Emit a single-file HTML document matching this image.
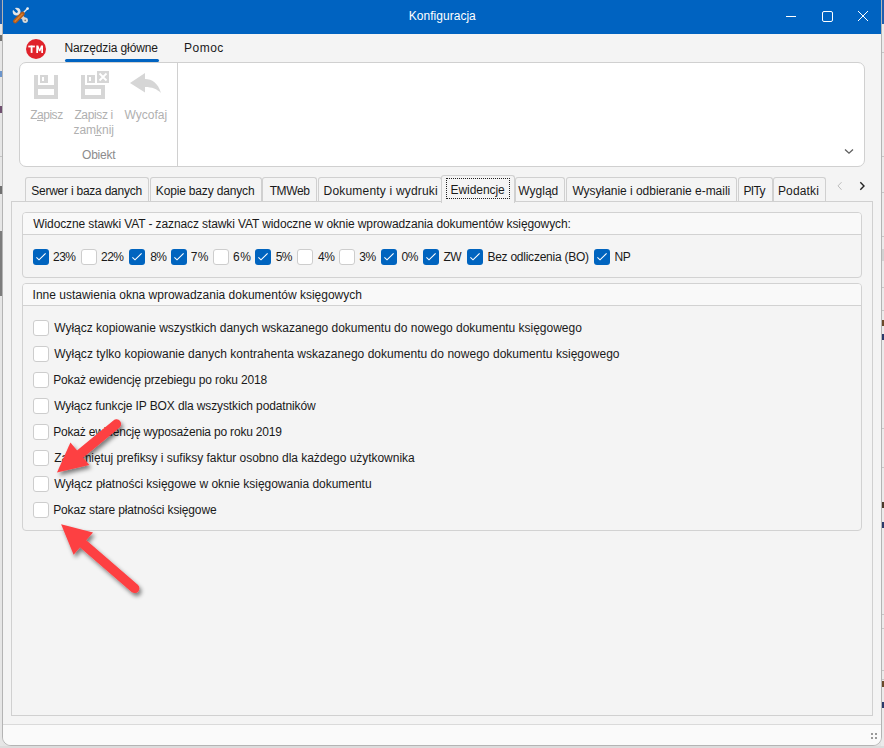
<!DOCTYPE html><html><head><meta charset="utf-8"><style>
html,body{margin:0;padding:0;}
body{width:884px;height:748px;overflow:hidden;position:relative;background:#e4e4e4;font-family:"Liberation Sans",sans-serif;}
.t{position:absolute;white-space:pre;font-family:"Liberation Sans",sans-serif;}
.a{position:absolute;}
</style></head><body><div style="position:absolute;left:0px;top:0px;width:3px;height:748px;background:#e6e6e6"></div>
<div style="position:absolute;left:0px;top:0px;width:3px;height:24px;background:#1f5fb0"></div>
<div style="position:absolute;left:0px;top:35px;width:2px;height:6px;background:#707070"></div>
<div style="position:absolute;left:0px;top:71px;width:2px;height:6px;background:#6b95cc"></div>
<div style="position:absolute;left:0px;top:106px;width:2px;height:7px;background:#705070"></div>
<div style="position:absolute;left:0px;top:156px;width:3px;height:1px;background:#c4c4c4"></div>
<div style="position:absolute;left:0px;top:186px;width:2px;height:8px;background:#707070"></div>
<div style="position:absolute;left:0px;top:231px;width:2px;height:65px;background:#7d7d7d"></div>
<div style="position:absolute;left:881px;top:0px;width:3px;height:748px;background:#ebebeb"></div>
<div style="position:absolute;left:881px;top:0px;width:3px;height:24px;background:#1f5fb0"></div>
<div style="position:absolute;left:881px;top:52px;width:3px;height:1px;background:#c6c6c6"></div>
<div style="position:absolute;left:881px;top:156px;width:3px;height:1px;background:#c6c6c6"></div>
<div style="position:absolute;left:881px;top:192px;width:3px;height:1px;background:#c6c6c6"></div>
<div style="position:absolute;left:881px;top:236px;width:3px;height:1px;background:#c6c6c6"></div>
<div style="position:absolute;left:881px;top:287px;width:3px;height:1px;background:#c6c6c6"></div>
<div style="position:absolute;left:881px;top:310px;width:3px;height:1px;background:#c6c6c6"></div>
<div style="position:absolute;left:881px;top:428px;width:3px;height:1px;background:#c6c6c6"></div>
<div style="position:absolute;left:881px;top:467px;width:3px;height:1px;background:#c6c6c6"></div>
<div style="position:absolute;left:881px;top:614px;width:3px;height:1px;background:#c6c6c6"></div>
<div style="position:absolute;left:881px;top:628px;width:3px;height:1px;background:#c6c6c6"></div>
<div style="position:absolute;left:881px;top:670px;width:3px;height:1px;background:#c6c6c6"></div>
<div style="position:absolute;left:881px;top:679px;width:3px;height:1px;background:#c6c6c6"></div>
<div style="position:absolute;left:881px;top:249px;width:3px;height:12px;background:#d2d2d2"></div>
<div style="position:absolute;left:882px;top:320px;width:2px;height:6px;background:#6a4a2a"></div>
<div style="position:absolute;left:882px;top:334px;width:2px;height:6px;background:#2a3a6a"></div>
<div style="position:absolute;left:882px;top:502px;width:2px;height:6px;background:#4a3a2a"></div>
<div style="position:absolute;left:882px;top:522px;width:2px;height:6px;background:#2a3a6a"></div>
<div style="position:absolute;left:882px;top:681px;width:2px;height:6px;background:#6a4a2a"></div>
<div style="position:absolute;left:882px;top:702px;width:2px;height:6px;background:#2a3a6a"></div>
<div style="position:absolute;left:0px;top:746px;width:884px;height:2px;background:#dcdcdc"></div>
<div class="a" style="left:2px;top:-1px;width:878px;height:745px;border:1px solid #b4b4b4;border-radius:0 0 9px 9px;background:#f4f4f4;overflow:hidden">
<div class="a" style="left:0;top:0;width:878px;height:34px;background:#0063c1"></div>
<div class="a" style="left:0;top:724px;width:878px;height:22px;border-top:1px solid #dadada;background:#fafafa"></div>
</div>
<div style="position:absolute;left:871px;top:733px;width:2px;height:2px;background:#999999"></div>
<div style="position:absolute;left:875px;top:733px;width:2px;height:2px;background:#999999"></div>
<div style="position:absolute;left:871px;top:737px;width:2px;height:2px;background:#999999"></div>
<div style="position:absolute;left:875px;top:737px;width:2px;height:2px;background:#999999"></div>
<svg class="a" style="left:0;top:0" width="884" height="40" viewBox="0 0 884 40">
<g stroke-linecap="round">
<line x1="17" y1="12" x2="25" y2="20" stroke="#d4d4d4" stroke-width="3.2"/>
<circle cx="16.6" cy="11.6" r="3.9" fill="#e6e6e6"/>
<path d="M16.6,11.6 L12.4,7.4" stroke="#0063c1" stroke-width="2.6"/>
<circle cx="25.2" cy="20.2" r="2.7" fill="#d8d8d8"/>
<circle cx="25.2" cy="20.4" r="0.8" fill="#707070"/>
<line x1="22" y1="14" x2="27.6" y2="8.4" stroke="#e4e4e4" stroke-width="1.4"/>
<circle cx="27.6" cy="8.6" r="1.3" fill="#f0f0f0"/>
<line x1="15.2" y1="21.2" x2="22.6" y2="13.8" stroke="#b35a1a" stroke-width="4.4"/>
<line x1="15.2" y1="21.2" x2="22.6" y2="13.8" stroke="#d9822e" stroke-width="1.6" stroke-dasharray="1 1.2"/>
</g>
<line x1="786" y1="16.5" x2="796" y2="16.5" stroke="#fff" stroke-width="1"/>
<rect x="822.5" y="11.5" width="10" height="10" rx="1.5" fill="none" stroke="#fff" stroke-width="1"/>
<path d="M858,11 L868,21 M868,11 L858,21" stroke="#fff" stroke-width="1"/>
</svg>
<div class="a" style="left:26px;top:39px;width:20px;height:20px;border-radius:50%;background:#e0222b"></div>
<svg class="a" style="left:20px;top:34px" width="30" height="30" viewBox="20 34 30 30"><rect x="28.3" y="45.6" width="6.6" height="1.8" fill="#fff"/><rect x="30.7" y="45.6" width="1.8" height="7.3" fill="#fff"/><path d="M36.3,52.9 V45.6 H38.3 L39.65,49.3 L41.0,45.6 H43 V52.9 H41.3 V48.4 L40.4,51.3 H38.9 L38.0,48.4 V52.9 Z" fill="#fff"/></svg>
<div style="position:absolute;left:65px;top:59px;width:94px;height:3px;background:#0063c1;border-radius:2px"></div>
<div class="a" style="left:19px;top:62px;width:844px;height:103px;border:1px solid #d0d0d0;border-radius:7px;background:#fff"></div>
<div style="position:absolute;left:177px;top:63px;width:1px;height:103px;background:#d0d0d0"></div>
<svg class="a" style="left:0;top:60px" width="200" height="50" viewBox="0 60 200 50">
<path fill="#d6d6d6" fill-rule="evenodd" d="M34,75 H38 V85 H54 V75 H58 V99 H34 Z M38,89 V95 H54 V89 Z"/>
<path fill="#d6d6d6" fill-rule="evenodd" d="M40,75 H48 V83 H40 Z M42,77 V81 H44 V77 Z"/>
<path fill="#d6d6d6" fill-rule="evenodd" d="M81,75 H85 V85 H105 V99 H81 Z M85,89 V95 H101 V89 Z"/>
<path fill="#d6d6d6" fill-rule="evenodd" d="M87,75 H95 V83 H87 Z M89,77 V81 H91 V77 Z"/>
<rect x="97" y="71" width="12" height="12" fill="#d6d6d6"/>
<path d="M99.5,73.5 L106.5,80.5 M106.5,73.5 L99.5,80.5" stroke="#fff" stroke-width="1.8"/>
<path fill="#d6d6d6" d="M130,83 L145,73 L145,79 C152,79 158,83 161,93 C157,89 152,87 145,87 L145,92.5 Z"/>
</svg>
<div style="position:absolute;left:37px;top:120px;width:6px;height:1px;background:#b4b4b4"></div>
<div style="position:absolute;left:95px;top:135px;width:6px;height:1px;background:#b4b4b4"></div>
<svg class="a" style="left:840px;top:144px" width="20" height="14" viewBox="840 144 20 14"><path d="M845,149.5 L849,153.2 L853,149.5" fill="none" stroke="#5f5f5f" stroke-width="1.3"/></svg>
<div class="a" style="left:11px;top:201px;width:860px;height:513px;border:1px solid #d0d0d0;background:#f4f4f4"></div>
<div class="a" style="left:25px;top:177px;width:122px;height:23px;border:1px solid #d0d0d0;border-bottom:none;border-radius:3px 3px 0 0;background:#f4f4f4"></div>
<div class="a" style="left:150px;top:177px;width:110px;height:23px;border:1px solid #d0d0d0;border-bottom:none;border-radius:3px 3px 0 0;background:#f4f4f4"></div>
<div class="a" style="left:262px;top:177px;width:53px;height:23px;border:1px solid #d0d0d0;border-bottom:none;border-radius:3px 3px 0 0;background:#f4f4f4"></div>
<div class="a" style="left:318px;top:177px;width:122px;height:23px;border:1px solid #d0d0d0;border-bottom:none;border-radius:3px 3px 0 0;background:#f4f4f4"></div>
<div class="a" style="left:515px;top:177px;width:48px;height:23px;border:1px solid #d0d0d0;border-bottom:none;border-radius:3px 3px 0 0;background:#f4f4f4"></div>
<div class="a" style="left:566px;top:177px;width:169px;height:23px;border:1px solid #d0d0d0;border-bottom:none;border-radius:3px 3px 0 0;background:#f4f4f4"></div>
<div class="a" style="left:738px;top:177px;width:33px;height:23px;border:1px solid #d0d0d0;border-bottom:none;border-radius:3px 3px 0 0;background:#f4f4f4"></div>
<div class="a" style="left:773px;top:177px;width:51px;height:23px;border:1px solid #d0d0d0;border-bottom:none;border-radius:3px 3px 0 0;background:#f4f4f4"></div>
<div class="a" style="left:441px;top:175px;width:72px;height:27px;border:1px solid #d0d0d0;border-bottom:none;border-radius:3px 3px 0 0;background:#f4f4f4"></div>
<div class="a" style="left:446px;top:178px;width:62px;height:19px;border:1px dotted #222"></div>
<svg class="a" style="left:830px;top:176px" width="44" height="20" viewBox="830 176 44 20"><path d="M841.5,182.2 L838,185.9 L841.5,189.7" fill="none" stroke="#bdbdbd" stroke-width="1"/><path d="M860.3,182.2 L864,185.9 L860.3,189.7" fill="none" stroke="#222" stroke-width="1.4"/></svg>
<div class="a" style="left:22px;top:212px;width:838px;height:64px;border:1px solid #d2d2d2;border-radius:4px;background:#f4f4f4;overflow:hidden"><div style="height:21px;background:#f9f9f9;border-bottom:1px solid #d2d2d2"></div></div>
<div class="a" style="left:22px;top:283px;width:838px;height:246px;border:1px solid #d2d2d2;border-radius:4px;background:#f4f4f4;overflow:hidden"><div style="height:21px;background:#f9f9f9;border-bottom:1px solid #d2d2d2"></div></div>
<svg class="a" style="left:33px;top:249px" width="16" height="16" viewBox="0 0 16 16"><rect x="0" y="0" width="16" height="16" rx="3" fill="#0064bf"/><path d="M3.4,8.4 L6,10.8 L12.6,4.4" fill="none" stroke="#fff" stroke-width="1.1"/></svg>
<div class="a" style="left:81px;top:249px;width:14px;height:14px;border:1px solid #cdcdcd;border-radius:3px;background:#fff"></div>
<svg class="a" style="left:129px;top:249px" width="16" height="16" viewBox="0 0 16 16"><rect x="0" y="0" width="16" height="16" rx="3" fill="#0064bf"/><path d="M3.4,8.4 L6,10.8 L12.6,4.4" fill="none" stroke="#fff" stroke-width="1.1"/></svg>
<svg class="a" style="left:171px;top:249px" width="16" height="16" viewBox="0 0 16 16"><rect x="0" y="0" width="16" height="16" rx="3" fill="#0064bf"/><path d="M3.4,8.4 L6,10.8 L12.6,4.4" fill="none" stroke="#fff" stroke-width="1.1"/></svg>
<div class="a" style="left:213px;top:249px;width:14px;height:14px;border:1px solid #cdcdcd;border-radius:3px;background:#fff"></div>
<svg class="a" style="left:255px;top:249px" width="16" height="16" viewBox="0 0 16 16"><rect x="0" y="0" width="16" height="16" rx="3" fill="#0064bf"/><path d="M3.4,8.4 L6,10.8 L12.6,4.4" fill="none" stroke="#fff" stroke-width="1.1"/></svg>
<div class="a" style="left:297px;top:249px;width:14px;height:14px;border:1px solid #cdcdcd;border-radius:3px;background:#fff"></div>
<div class="a" style="left:339px;top:249px;width:14px;height:14px;border:1px solid #cdcdcd;border-radius:3px;background:#fff"></div>
<svg class="a" style="left:381px;top:249px" width="16" height="16" viewBox="0 0 16 16"><rect x="0" y="0" width="16" height="16" rx="3" fill="#0064bf"/><path d="M3.4,8.4 L6,10.8 L12.6,4.4" fill="none" stroke="#fff" stroke-width="1.1"/></svg>
<svg class="a" style="left:423px;top:249px" width="16" height="16" viewBox="0 0 16 16"><rect x="0" y="0" width="16" height="16" rx="3" fill="#0064bf"/><path d="M3.4,8.4 L6,10.8 L12.6,4.4" fill="none" stroke="#fff" stroke-width="1.1"/></svg>
<svg class="a" style="left:467px;top:249px" width="16" height="16" viewBox="0 0 16 16"><rect x="0" y="0" width="16" height="16" rx="3" fill="#0064bf"/><path d="M3.4,8.4 L6,10.8 L12.6,4.4" fill="none" stroke="#fff" stroke-width="1.1"/></svg>
<svg class="a" style="left:594px;top:249px" width="16" height="16" viewBox="0 0 16 16"><rect x="0" y="0" width="16" height="16" rx="3" fill="#0064bf"/><path d="M3.4,8.4 L6,10.8 L12.6,4.4" fill="none" stroke="#fff" stroke-width="1.1"/></svg>
<div class="a" style="left:33px;top:320px;width:14px;height:14px;border:1px solid #cdcdcd;border-radius:3px;background:#fff"></div>
<div class="a" style="left:33px;top:346px;width:14px;height:14px;border:1px solid #cdcdcd;border-radius:3px;background:#fff"></div>
<div class="a" style="left:33px;top:372px;width:14px;height:14px;border:1px solid #cdcdcd;border-radius:3px;background:#fff"></div>
<div class="a" style="left:33px;top:398px;width:14px;height:14px;border:1px solid #cdcdcd;border-radius:3px;background:#fff"></div>
<div class="a" style="left:33px;top:424px;width:14px;height:14px;border:1px solid #cdcdcd;border-radius:3px;background:#fff"></div>
<div class="a" style="left:33px;top:450px;width:14px;height:14px;border:1px solid #cdcdcd;border-radius:3px;background:#fff"></div>
<div class="a" style="left:33px;top:476px;width:14px;height:14px;border:1px solid #cdcdcd;border-radius:3px;background:#fff"></div>
<div class="a" style="left:33px;top:502px;width:14px;height:14px;border:1px solid #cdcdcd;border-radius:3px;background:#fff"></div>
<div class="t" style="left:408.7px;top:10px;letter-spacing:0.036px;color:#ffffff;font-size:12px;line-height:12px">Konfiguracja</div>
<div class="t" style="left:64.4px;top:42px;letter-spacing:-0.12px;color:#1a1a1a;font-size:12px;line-height:12px">Narzędzia główne</div>
<div class="t" style="left:184.0px;top:42px;letter-spacing:0.5px;color:#1a1a1a;font-size:12px;line-height:12px">Pomoc</div>
<div class="t" style="left:30.2px;top:109px;letter-spacing:-0.48px;color:#b0b0b0;font-size:12px;line-height:12px">Zapisz</div>
<div class="t" style="left:74.4px;top:109px;letter-spacing:-0.371px;color:#b0b0b0;font-size:12px;line-height:12px">Zapisz i</div>
<div class="t" style="left:73.5px;top:124px;letter-spacing:-0.034px;color:#b0b0b0;font-size:12px;line-height:12px">zamknij</div>
<div class="t" style="left:124.5px;top:109px;letter-spacing:-0.0px;color:#b0b0b0;font-size:12px;line-height:12px">Wycofaj</div>
<div class="t" style="left:82.0px;top:149px;letter-spacing:-0.2px;color:#8c8c8c;font-size:12px;line-height:12px">Obiekt</div>
<div class="t" style="left:31.2px;top:185px;letter-spacing:-0.231px;color:#1a1a1a;font-size:12px;line-height:12px">Serwer i baza danych</div>
<div class="t" style="left:155.8px;top:185px;letter-spacing:-0.163px;color:#1a1a1a;font-size:12px;line-height:12px">Kopie bazy danych</div>
<div class="t" style="left:269.7px;top:185px;letter-spacing:-0.4px;color:#1a1a1a;font-size:12px;line-height:12px">TMWeb</div>
<div class="t" style="left:323.6px;top:185px;letter-spacing:0.189px;color:#1a1a1a;font-size:12px;line-height:12px">Dokumenty i wydruki</div>
<div class="t" style="left:518.2px;top:185px;letter-spacing:0.04px;color:#1a1a1a;font-size:12px;line-height:12px">Wygląd</div>
<div class="t" style="left:572.4px;top:185px;letter-spacing:-0.028px;color:#1a1a1a;font-size:12px;line-height:12px">Wysyłanie i odbieranie e-maili</div>
<div class="t" style="left:743.4px;top:185px;letter-spacing:-0.6px;color:#1a1a1a;font-size:12px;line-height:12px">PITy</div>
<div class="t" style="left:777.9px;top:185px;letter-spacing:0.167px;color:#1a1a1a;font-size:12px;line-height:12px">Podatki</div>
<div class="t" style="left:450.6px;top:184px;letter-spacing:-0.076px;color:#1a1a1a;font-size:12px;line-height:12px">Ewidencje</div>
<div class="t" style="left:33.3px;top:218px;letter-spacing:-0.109px;color:#1a1a1a;font-size:12px;line-height:12px">Widoczne stawki VAT - zaznacz stawki VAT widoczne w oknie wprowadzania dokumentów księgowych:</div>
<div class="t" style="left:53.1px;top:251px;letter-spacing:-0.6px;color:#1a1a1a;font-size:12px;line-height:12px">23%</div>
<div class="t" style="left:101.0px;top:251px;letter-spacing:-0.5px;color:#1a1a1a;font-size:12px;line-height:12px">22%</div>
<div class="t" style="left:150.2px;top:251px;letter-spacing:-0.6px;color:#1a1a1a;font-size:12px;line-height:12px">8%</div>
<div class="t" style="left:190.8px;top:251px;letter-spacing:0.2px;color:#1a1a1a;font-size:12px;line-height:12px">7%</div>
<div class="t" style="left:232.9px;top:251px;letter-spacing:0.6px;color:#1a1a1a;font-size:12px;line-height:12px">6%</div>
<div class="t" style="left:275.7px;top:251px;letter-spacing:-0.6px;color:#1a1a1a;font-size:12px;line-height:12px">5%</div>
<div class="t" style="left:317.9px;top:251px;letter-spacing:-0.4px;color:#1a1a1a;font-size:12px;line-height:12px">4%</div>
<div class="t" style="left:359.2px;top:251px;letter-spacing:-0.4px;color:#1a1a1a;font-size:12px;line-height:12px">3%</div>
<div class="t" style="left:401.6px;top:251px;letter-spacing:-0.4px;color:#1a1a1a;font-size:12px;line-height:12px">0%</div>
<div class="t" style="left:443.6px;top:251px;letter-spacing:-0.6px;color:#1a1a1a;font-size:12px;line-height:12px">ZW</div>
<div class="t" style="left:487.4px;top:251px;letter-spacing:-0.245px;color:#1a1a1a;font-size:12px;line-height:12px">Bez odliczenia (BO)</div>
<div class="t" style="left:614.4px;top:251px;letter-spacing:-0.2px;color:#1a1a1a;font-size:12px;line-height:12px">NP</div>
<div class="t" style="left:32.6px;top:289px;letter-spacing:-0.004px;color:#1a1a1a;font-size:12px;line-height:12px">Inne ustawienia okna wprowadzania dokumentów księgowych</div>
<div class="t" style="left:54.2px;top:322px;letter-spacing:-0.014px;color:#1a1a1a;font-size:12px;line-height:12px">Wyłącz kopiowanie wszystkich danych wskazanego dokumentu do nowego dokumentu księgowego</div>
<div class="t" style="left:54.2px;top:348px;letter-spacing:0.026px;color:#1a1a1a;font-size:12px;line-height:12px">Wyłącz tylko kopiowanie danych kontrahenta wskazanego dokumentu do nowego dokumentu księgowego</div>
<div class="t" style="left:53.2px;top:374px;letter-spacing:-0.146px;color:#1a1a1a;font-size:12px;line-height:12px">Pokaż ewidencję przebiegu po roku 2018</div>
<div class="t" style="left:54.2px;top:400px;letter-spacing:-0.122px;color:#1a1a1a;font-size:12px;line-height:12px">Wyłącz funkcje IP BOX dla wszystkich podatników</div>
<div class="t" style="left:53.2px;top:426px;letter-spacing:-0.189px;color:#1a1a1a;font-size:12px;line-height:12px">Pokaż ewidencję wyposażenia po roku 2019</div>
<div class="t" style="left:54.2px;top:452px;letter-spacing:-0.036px;color:#1a1a1a;font-size:12px;line-height:12px">Zapamiętuj prefiksy i sufiksy faktur osobno dla każdego użytkownika</div>
<div class="t" style="left:54.2px;top:478px;letter-spacing:-0.025px;color:#1a1a1a;font-size:12px;line-height:12px">Wyłącz płatności księgowe w oknie księgowania dokumentu</div>
<div class="t" style="left:53.2px;top:504px;letter-spacing:-0.138px;color:#1a1a1a;font-size:12px;line-height:12px">Pokaz stare płatności księgowe</div>
<svg class="a" style="left:0;top:0" width="884" height="748" viewBox="0 0 884 748">
<defs><filter id="sh" x="-30%" y="-30%" width="160%" height="160%"><feGaussianBlur in="SourceAlpha" stdDeviation="2"/><feOffset dx="1.5" dy="2.5" result="o"/><feComponentTransfer><feFuncA type="linear" slope="0.5"/></feComponentTransfer><feMerge><feMergeNode/><feMergeNode in="SourceGraphic"/></feMerge></filter></defs>
<g filter="url(#sh)" fill="#fd4043" stroke="none">
<line x1="80.3" y1="453.8" x2="116.4" y2="424.1" stroke="#fd4043" stroke-width="9.5" stroke-linecap="round"/>
<polygon points="57,472.6 70.4,442.4 89.4,465.1"/>
</g>
<g filter="url(#sh)" fill="#fd4043" stroke="none">
<line x1="83.8" y1="544.3" x2="134.7" y2="588.3" stroke="#fd4043" stroke-width="9.5" stroke-linecap="round"/>
<polygon points="61.1,524.3 93,532.6 73.6,554.8"/>
</g>
</svg>
</body></html>
